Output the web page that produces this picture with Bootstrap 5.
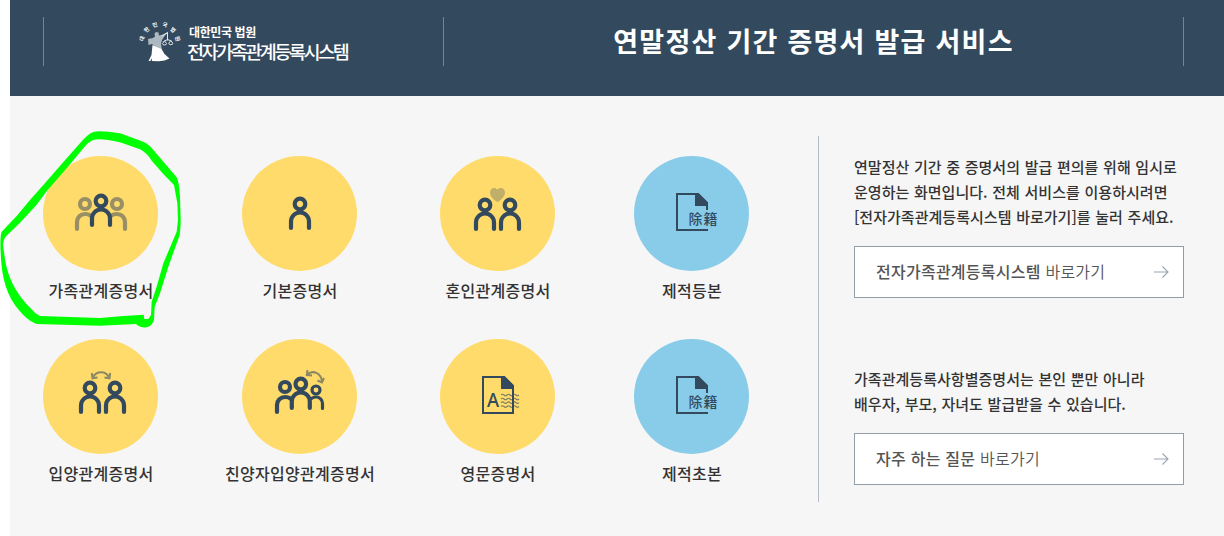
<!DOCTYPE html>
<html lang="ko">
<head>
    <meta charset="UTF-8">
    <meta name="viewport" content="width=device-width, initial-scale=1.0">
    <title>연말정산 기간 증명서 발급 서비스</title>
    <link href="https://cdn.jsdelivr.net/npm/bootstrap@5.3.0/dist/css/bootstrap.min.css" rel="stylesheet">
    <style>
        body {
            font-family: "Noto Sans CJK KR", sans-serif;
            color: #333;
            height: 536px;
            overflow: hidden;
        }
        .page-wrap { margin-left: 10px; height: 536px; background: #f6f6f6; }

        /* Header */
        .top-bar { height: 96px; background: #334a5e; padding: 17px 40px 30px 33px; }
        .logo-area { width: 401px; border-left: 1px solid #778592; border-right: 1px solid #778592; padding-left: 94px; }
        .title-area { border-right: 1px solid #778592; }
        .emblem { width: 44px; height: 44px; margin-top: 3px; }
        .logo-text { margin: 6px 0 0 5px; }
        .logo-top { font-size: 12px; line-height: 18px; font-weight: 700; letter-spacing: -.4px; padding-left: 2px; }
        .logo-name { font-size: 18.5px; line-height: 21px; font-weight: 500; letter-spacing: -2.45px; }
        .service-title { font-size: 27px; line-height: 47px; font-weight: 700; letter-spacing: 1.2px; word-spacing: .2px; }

        /* Certificate menu */
        .cert-area { width: 809px; height: 366px; border-right: 1px solid #b5bcc4; padding: 20px 12px 0 0; }
        .cert-grid { grid-template-columns: 181px 217px 179px 209px; row-gap: 30px; }
        .cert-item { color: #333; }
        .cert-item svg { width: 115px; height: 115px; display: block; }
        .cert-name { font-size: 16px; line-height: 38px; font-weight: 500; letter-spacing: .3px; padding-left: 1px; }
        .person { fill: none; stroke: #334a5e; stroke-width: 4.2; stroke-linecap: round; }
        .person-faded { stroke: #998f65; }
        .person-child { stroke-width: 3.2; }
        .thin { fill: none; stroke: #334a5e; stroke-width: 2; }
        .solid { fill: #334a5e; }

        /* Guide column */
        .guide-area { width: 330px; margin-left: 35px; padding-top: 18px; }
        .guide-text { font-size: 15px; line-height: 25px; font-weight: 500; letter-spacing: .03px; word-spacing: .4px; margin-bottom: 17px; }
        .guide-link { height: 52px; border: 1px solid #919da8; background: #fff; color: #555; font-size: 16px; letter-spacing: .25px; padding: 0 14px 2px 21px; }
        .guide-link b { font-weight: 500; }
        .guide-link span { font-weight: 350; }
        .guide-link svg { margin-top: 1px; }
        .guide-gap { margin-bottom: 68px; }

        .pen-mark { left: 0; top: 120px; width: 200px; height: 220px; pointer-events: none; }
    </style>
</head>
<body class="position-relative">
    <svg width="0" height="0" class="position-absolute">
        <defs>
            <g id="man">
                <circle r="5.3"/>
                <path d="M-9 24V17.5a9 9 0 0 1 18 0V24"/>
            </g>
            <g id="oldDoc">
                <path class="thin" d="M74 74H43V38H64L73 47V54"/>
                <path class="solid" d="M61 37H64.5L74 46.5V50H61z"/>
                <text x="54.500" y="67.600" font-size="14" font-weight="500" letter-spacing="1" fill="#334a5e">除籍</text>
            </g>
        </defs>
    </svg>

    <div class="page-wrap">
        <!-- Header -->
        <header class="top-bar d-flex text-white text-nowrap">
            <div class="logo-area d-flex">
                <svg class="emblem" viewBox="138 20 44 44">
                    <g fill="#fff" font-size="5.500" font-weight="700" text-anchor="middle">
                        <text transform="translate(142 38.5) rotate(-75)" y="2">대</text>
                        <text transform="translate(146.7 29.8) rotate(-45)" y="2">한</text>
                        <text transform="translate(155 24.8) rotate(-15)" y="2">민</text>
                        <text transform="translate(165 24.8) rotate(15)" y="2">국</text>
                        <text transform="translate(173 30) rotate(45)" y="2">법</text>
                        <text transform="translate(177.5 38.7) rotate(75)" y="2">원</text>
                    </g>
                    <path fill="#aeb8c1" d="M148 39l5-1 2-1.500-.5-3 1.500-1.500 2.500 .5 .5 3 4-1 5.500-3-4 4.500-2.500 4-1 4 1 6-5-2-5-4-3.500 1z"/>
                    <path fill="#fff" d="M152.500 45l4 2 5 2 3 5 5 4.500-5 2-6 .8-6.500-.3-.5-3-1 3h-2l3-6z"/>
                    <g fill="none" stroke="#e3e7ea" stroke-width="1">
                        <path d="M162 36l6-3.500M167.500 32.500v8M163.500 41.500l4-2 4 1.500"/>
                        <path d="M162.500 43.500a2 1.500 0 0 0 4 0l-2-2.500zM168.800 43.200a2 1.500 0 0 0 4 0l-2-2.500z"/>
                    </g>
                </svg>
                <div class="logo-text">
                    <div class="logo-top">대한민국 법원</div>
                    <div class="logo-name">전자가족관계등록시스템</div>
                </div>
            </div>
            <div class="title-area flex-grow-1 text-center">
                <h1 class="service-title mb-0">연말정산 기간 증명서 발급 서비스</h1>
            </div>
        </header>

        <!-- Main content -->
        <main class="d-flex pt-4 mt-3">
            <div class="cert-area">
                <div class="cert-grid d-grid text-nowrap">
                    <a href="#" class="cert-item d-flex flex-column align-items-center text-decoration-none">
                        <svg viewBox="0 0 115 115">
                            <circle cx="57.5" cy="57.5" r="57.5" fill="#ffdb6b"/>
                            <g class="person person-faded">
                                <circle cx="42" cy="48" r="5"/>
                                <circle cx="74" cy="48" r="5"/>
                                <path d="M34 73V66a8 8 0 0 1 8-8q4 0 6 2"/>
                                <path d="M82 73V66a8 8 0 0 0-8-8q-4 0-6 2"/>
                            </g>
                            <use href="#man" class="person" x="58" y="45"/>
                        </svg>
                        <span class="cert-name">가족관계증명서</span>
                    </a>
                    <a href="#" class="cert-item d-flex flex-column align-items-center text-decoration-none">
                        <svg viewBox="0 0 115 115">
                            <circle cx="57.5" cy="57.5" r="57.5" fill="#ffdb6b"/>
                            <use href="#man" class="person" x="58" y="48"/>
                        </svg>
                        <span class="cert-name">기본증명서</span>
                    </a>
                    <a href="#" class="cert-item d-flex flex-column align-items-center text-decoration-none">
                        <svg viewBox="0 0 115 115">
                            <circle cx="57.5" cy="57.5" r="57.5" fill="#ffdb6b"/>
                            <path fill="#c0af68" d="M57.500 46C54 44 50 40.500 50 36.500C50 31.500 55.500 30.500 57.500 33.800C59.500 30.500 65 31.500 65 36.500C65 40.500 61 44 57.500 46z"/>
                            <use href="#man" class="person" x="45" y="49"/>
                            <use href="#man" class="person" x="70" y="49"/>
                        </svg>
                        <span class="cert-name">혼인관계증명서</span>
                    </a>
                    <a href="#" class="cert-item d-flex flex-column align-items-center text-decoration-none">
                        <svg viewBox="0 0 115 115">
                            <circle cx="57.5" cy="57.5" r="57.5" fill="#88cce9"/>
                            <use href="#oldDoc"/>
                        </svg>
                        <span class="cert-name">제적등본</span>
                    </a>
                    <a href="#" class="cert-item d-flex flex-column align-items-center text-decoration-none">
                        <svg viewBox="0 0 115 115">
                            <circle cx="57.5" cy="57.5" r="57.5" fill="#ffdb6b"/>
                            <path d="M50 38.500C53 31.500 63 31.500 66 38.500M48.800 34L49.500 39.300L54.500 38.500M67.200 34L66.500 39.300L61.500 38.500" fill="none" stroke="#8b8864" stroke-width="2"/>
                            <use href="#man" class="person" x="47" y="49"/>
                            <use href="#man" class="person" x="72" y="49"/>
                        </svg>
                        <span class="cert-name">입양관계증명서</span>
                    </a>
                    <a href="#" class="cert-item d-flex flex-column align-items-center text-decoration-none">
                        <svg viewBox="0 0 115 115">
                            <circle cx="57.5" cy="57.5" r="57.5" fill="#ffdb6b"/>
                            <path d="M65 35.500C71 30.500 79 34 80 42.500M65.500 31L64.800 36L70 36.500M75.500 41.500L80 43.500L82 39" fill="none" stroke="#8b8864" stroke-width="2"/>
                            <g class="person">
                                <circle cx="43" cy="48" r="5"/>
                                <path d="M35 73V66a8 8 0 0 1 8-8q4 0 6 2"/>
                                <use href="#man" x="58.8" y="45"/>
                                <g class="person-child">
                                    <circle cx="74" cy="51" r="4"/>
                                    <path d="M69.500 59.500q2-1.500 4.500-1.500a6.500 6.500 0 0 1 6.500 6.500V69.500"/>
                                </g>
                            </g>
                        </svg>
                        <span class="cert-name">친양자입양관계증명서</span>
                    </a>
                    <a href="#" class="cert-item d-flex flex-column align-items-center text-decoration-none">
                        <svg viewBox="0 0 115 115">
                            <circle cx="57.5" cy="57.5" r="57.5" fill="#ffdb6b"/>
                            <path class="thin" d="M64 38H43V74H73V47z"/>
                            <path class="solid" d="M61 37H64.500L74 46.500V50H61z"/>
                            <text transform="translate(47 68) scale(.9 1)" font-family="Noto Sans, sans-serif" font-size="20.500" font-weight="500" fill="#334a5e">A</text>
                            <g fill="none" stroke="#334a5e" stroke-opacity=".65" stroke-width="1.1">
                                <path d="M61 56q1.500-1.500 3 0t3 0t3 0t3 0t3 0t3 0"/>
                                <path d="M61 60q1.500-1.500 3 0t3 0t3 0t3 0t3 0t3 0"/>
                                <path d="M61 63.700q1.500-1.500 3 0t3 0t3 0t3 0t3 0t3 0"/>
                                <path d="M61 67.500q1.500-1.500 3 0t3 0t3 0t3 0t3 0t3 0"/>
                            </g>
                        </svg>
                        <span class="cert-name">영문증명서</span>
                    </a>
                    <a href="#" class="cert-item d-flex flex-column align-items-center text-decoration-none">
                        <svg viewBox="0 0 115 115">
                            <circle cx="57.5" cy="57.5" r="57.5" fill="#88cce9"/>
                            <use href="#oldDoc"/>
                        </svg>
                        <span class="cert-name">제적초본</span>
                    </a>
                </div>
            </div>

            <div class="guide-area text-nowrap">
                <p class="guide-text">연말정산 기간 중 증명서의 발급 편의를 위해 임시로<br>운영하는 화면입니다. 전체 서비스를 이용하시려면<br>[전자가족관계등록시스템 바로가기]를 눌러 주세요.</p>
                <a href="#" class="guide-link guide-gap d-flex align-items-center justify-content-between text-decoration-none">
                    <div><b>전자가족관계등록시스템</b> <span>바로가기</span></div>
                    <svg width="15" height="12" viewBox="0 0 15 12" fill="none" stroke="#9aa5af" stroke-width="1.1"><path d="M0 6H14M8.500 .5L14 6L8.500 11.500"/></svg>
                </a>
                <p class="guide-text">가족관계등록사항별증명서는 본인 뿐만 아니라<br>배우자, 부모, 자녀도 발급받을 수 있습니다.</p>
                <a href="#" class="guide-link d-flex align-items-center justify-content-between text-decoration-none">
                    <div><b>자주 하는 질문</b> <span>바로가기</span></div>
                    <svg width="15" height="12" viewBox="0 0 15 12" fill="none" stroke="#9aa5af" stroke-width="1.1"><path d="M0 6H14M8.500 .5L14 6L8.500 11.500"/></svg>
                </a>
            </div>
        </main>
    </div>

    <!-- Hand drawn marker around the first certificate -->
    <svg class="pen-mark position-absolute" viewBox="0 0 600 660">
        <path fill="#0f0" fill-rule="evenodd" d="M5 335L50 288L90 240L130 195L200 115L240 70Q265 40 280 36Q300 30 360 40L430 65Q450 75 462 92L530 172Q538 190 540 230L542 300Q542 330 538 348L505 440L480 520L464 560L462 600Q455 620 440 622Q420 624 408 612L300 617L110 612Q90 605 70 585Q40 555 25 520Q8 480 4 430Q-2 350 5 335z
            M9 375Q10 355 22 345L60 308L110 254L140 214L200 145L250 85Q265 65 280 60Q300 53 360 67L420 88Q440 98 455 122L490 162L522 195L532 250L534 300L530 335L490 430L470 500L455 545L453 585L445 597L433 597L431 584L370 588L300 594L120 588Q105 582 95 568Q65 540 45 505Q25 470 16 425z"/>
    </svg>

    <script src="https://cdn.jsdelivr.net/npm/bootstrap@5.3.0/dist/js/bootstrap.bundle.min.js"></script>
</body>
</html>
